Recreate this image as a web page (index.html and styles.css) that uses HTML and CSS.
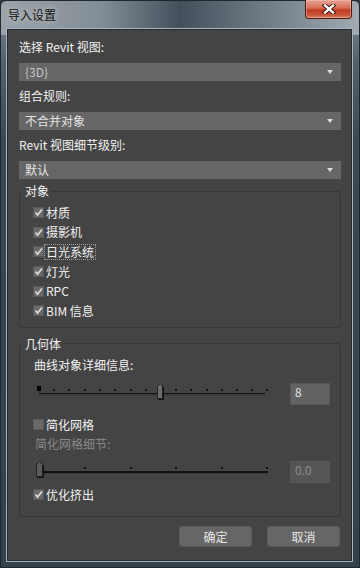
FILE: index.html
```html
<!DOCTYPE html>
<html lang="zh-CN">
<head>
  <meta charset="UTF-8">
  <meta name="viewport" content="width=device-width, initial-scale=1.0">
  <link rel="stylesheet" href="styles.css">
  <title>导入设置</title>
</head>
<body>
  <div class="window">
    <div class="titlebar">
      <span class="title">导入设置</span>
      <button class="close">
        <svg width="14" height="10" viewBox="0 0 14 10">
          <path d="M3 1.5 L11 8.5 M11 1.5 L3 8.5" stroke="#3b1510" stroke-width="4.4" stroke-linecap="square"/>
          <path d="M3 1.5 L11 8.5 M11 1.5 L3 8.5" stroke="#fff" stroke-width="2.4" stroke-linecap="square"/>
        </svg>
      </button>
    </div>

    <div class="client">
      <div class="label first">选择 Revit 视图:</div>
      <div class="select dim">{3D}<span class="arrow"></span></div>

      <div class="label">组合规则:</div>
      <div class="select">不合并对象<span class="arrow"></span></div>

      <div class="label">Revit 视图细节级别:</div>
      <div class="select last">默认<span class="arrow"></span></div>

      <fieldset class="group objects">
        <legend>对象</legend>
        <div class="check"><span class="box on"></span><span class="text">材质</span></div>
        <div class="check"><span class="box on"></span><span class="text">摄影机</span></div>
        <div class="check"><span class="box on"></span><span class="text focus">日光系统</span></div>
        <div class="check"><span class="box on"></span><span class="text">灯光</span></div>
        <div class="check"><span class="box on"></span><span class="text">RPC</span></div>
        <div class="check"><span class="box on"></span><span class="text">BIM 信息</span></div>
      </fieldset>

      <fieldset class="group geometry">
        <legend>几何体</legend>
        <div class="sublabel">曲线对象详细信息:</div>
        <div class="slider-row">
          <svg class="slider" width="233" height="18" viewBox="0 0 233 18">
            <rect x="1" y="3" width="4" height="5" fill="#000"/>
            <g fill="#111">
              <rect x="17" y="6" width="2" height="2"/>
              <rect x="32" y="6" width="2" height="2"/>
              <rect x="48" y="6" width="2" height="2"/>
              <rect x="63" y="6" width="2" height="2"/>
              <rect x="78" y="6" width="2" height="2"/>
              <rect x="94" y="6" width="2" height="2"/>
              <rect x="109" y="6" width="2" height="2"/>
              <rect x="139" y="6" width="2" height="2"/>
              <rect x="154" y="6" width="2" height="2"/>
              <rect x="170" y="6" width="2" height="2"/>
              <rect x="185" y="6" width="2" height="2"/>
              <rect x="200" y="6" width="2" height="2"/>
              <rect x="215" y="6" width="2" height="2"/>
              <rect x="230" y="6" width="2" height="2"/>
            </g>
            <rect x="3" y="10" width="226" height="1" fill="#111"/>
            <rect x="3" y="11" width="226" height="2" fill="#3a3a3a"/>
            <path d="M122.5 4.5 L125 1.5 L127.5 4.5 L127.5 16.5 L122.5 16.5 Z" fill="#111" stroke="#111"/>
            <path d="M121.5 3.5 L124.5 0.5 L126.5 3.5 L126.5 15.5 L121.5 15.5 Z" fill="#6c6c6c" stroke="#222"/>
          </svg>
          <div class="field">8</div>
        </div>
        <div class="check spaced"><span class="box"></span><span class="text">简化网格</span></div>
        <div class="sublabel disabled">简化网格细节:</div>
        <div class="slider-row second">
          <svg class="slider" width="233" height="18" viewBox="0 0 233 18">
            <g fill="#111">
              <rect x="48" y="6" width="2" height="2"/>
              <rect x="94" y="6" width="2" height="2"/>
              <rect x="139" y="6" width="2" height="2"/>
              <rect x="185" y="6" width="2" height="2"/>
              <rect x="230" y="6" width="2" height="2"/>
            </g>
            <rect x="4" y="10" width="228" height="2" fill="#111"/>
            <rect x="4" y="12" width="228" height="1" fill="#3a3a3a"/>
            <path d="M1.5 4.5 L4 1.5 L7.5 4.5 L7.5 16.5 L1.5 16.5 Z" fill="#111" stroke="#111"/>
            <path d="M0.5 3.5 L3.5 0.5 L6.5 3.5 L6.5 15.5 L0.5 15.5 Z" fill="#5a5a5a" stroke="#222"/>
          </svg>
          <div class="field disabled">0.0</div>
        </div>
        <div class="check"><span class="box on"></span><span class="text">优化挤出</span></div>
      </fieldset>

      <div class="buttons">
        <button class="btn">确定</button>
        <button class="btn">取消</button>
      </div>
    </div>
  </div>
</body>
</html>
```

FILE: styles.css
```css
body {
  margin: 0;
  background-color: #2c3843;
  font-family: "Noto Sans CJK SC", "Liberation Sans", sans-serif;
  font-size: 12px;
}

.window {
  width: 360px;
  height: 568px;
  box-sizing: border-box;
  display: flex;
  flex-direction: column;
  border: 1px solid #1e2831;
  border-radius: 6px 6px 0 0;
  background:
    linear-gradient(to right, #9ca4aa 0%, #838d95 28%, #43505c 50%, #6c7882 72%, #a3aab0 100%) top / 100% 34px no-repeat,
    linear-gradient(to bottom, #7f8991 0, #55626d 60px, #3a4854 140px, #33414d 100%);
}

.titlebar {
  height: 28px;
  display: flex;
  justify-content: space-between;
  align-items: flex-start;
  padding: 0 7px 0 7px;
}

.title {
  margin-top: 6px;
  color: #111;
  line-height: 16px;
  text-shadow: 0 0 6px rgba(255, 255, 255, 0.6);
}

.close {
  width: 47px;
  height: 19px;
  margin-top: -1px;
  padding: 0;
  border: 1px solid #4a1d18;
  border-top: none;
  border-radius: 0 0 4px 4px;
  background: linear-gradient(to bottom, #e7a597 0%, #d86c55 45%, #bf3a20 55%, #c9563b 85%, #e08a6e 100%);
  box-shadow: inset 0 0 0 1px rgba(255, 210, 200, 0.35);
  display: flex;
  align-items: center;
  justify-content: center;
}

.client {
  flex: 1;
  margin: 0 7px 6px 6px;
  padding: 9px 10px 0 11px;
  background-color: #444444;
  border: 1px solid #252a2f;
  box-shadow: 0 0 0 1px #a7b3be;
  color: #f2f2f2;
}

.label {
  line-height: 16px;
  margin-top: 7px;
}

.label.first {
  margin-top: 0;
}

.select {
  height: 18px;
  margin-top: 8px;
  padding: 0 8px 0 6px;
  background-color: #666666;
  color: #e2e2e2;
  line-height: 18px;
  display: flex;
  justify-content: space-between;
  align-items: center;
}

.select.dim {
  color: #c6c6c6;
}

.arrow {
  width: 0;
  height: 0;
  border-left: 3px solid transparent;
  border-right: 3px solid transparent;
  border-top: 4px solid #dcdcdc;
}

.group {
  margin: 4px 0 0 0;
  padding: 4px 0 6px 13px;
  border: 1px solid #363636;
  border-radius: 3px;
  min-width: 0;
}

.group legend {
  margin-left: -10px;
  padding: 0 2px;
  line-height: 16px;
  color: #f2f2f2;
}

.group.geometry {
  margin-top: 8px;
  padding-top: 5px;
  padding-bottom: 11px;
}

.check {
  height: 19.6px;
  display: flex;
  align-items: center;
}

.box {
  width: 11px;
  height: 11px;
  box-sizing: border-box;
  background-color: #696969;
  border: 1px solid #5a5a5a;
}

.box.on {
  background:
    url("data:image/svg+xml,%3Csvg xmlns='http://www.w3.org/2000/svg' width='9' height='9'%3E%3Cpath d='M1.5 4.5 L3.5 7 L8 1.5' fill='none' stroke='%23d8d8d8' stroke-width='1.8'/%3E%3C/svg%3E") center / 9px 9px no-repeat,
    #696969;
}

.text {
  padding: 0 1px;
  border: 1px dotted transparent;
  line-height: 14px;
}

.text.focus {
  border-color: #a0a0a0;
}

.sublabel {
  line-height: 16px;
  margin-left: 1px;
}

.sublabel.disabled {
  height: 18px;
  line-height: 18px;
  margin-left: 2px;
  color: #8a8a8a;
}

.geometry .check {
  height: 20px;
}

.geometry .check.spaced {
  margin-top: 10px;
}

.slider-row {
  display: flex;
  align-items: flex-start;
  margin: 10px 0 0 3px;
}

.slider-row.second {
  margin-top: 8px;
  margin-bottom: 2px;
}

.field {
  width: 40px;
  height: 22px;
  box-sizing: border-box;
  margin-left: 21px;
  padding: 1px 4px;
  background-color: #626262;
  border: 1px solid #575757;
  color: #e4e4e4;
  line-height: 14px;
}

.field.disabled {
  background-color: #555555;
  color: #8e8e8e;
}

.buttons {
  display: flex;
  justify-content: flex-end;
  gap: 15px;
  margin: 9px 1px 0 0;
}

.btn {
  width: 73px;
  height: 21px;
  padding: 0;
  background-color: #666666;
  border: 1px solid #5a5a5a;
  border-radius: 3px;
  color: #e8e8e8;
  font-family: "Noto Sans CJK SC", "Liberation Sans", sans-serif;
  font-size: 12px;
}
```
